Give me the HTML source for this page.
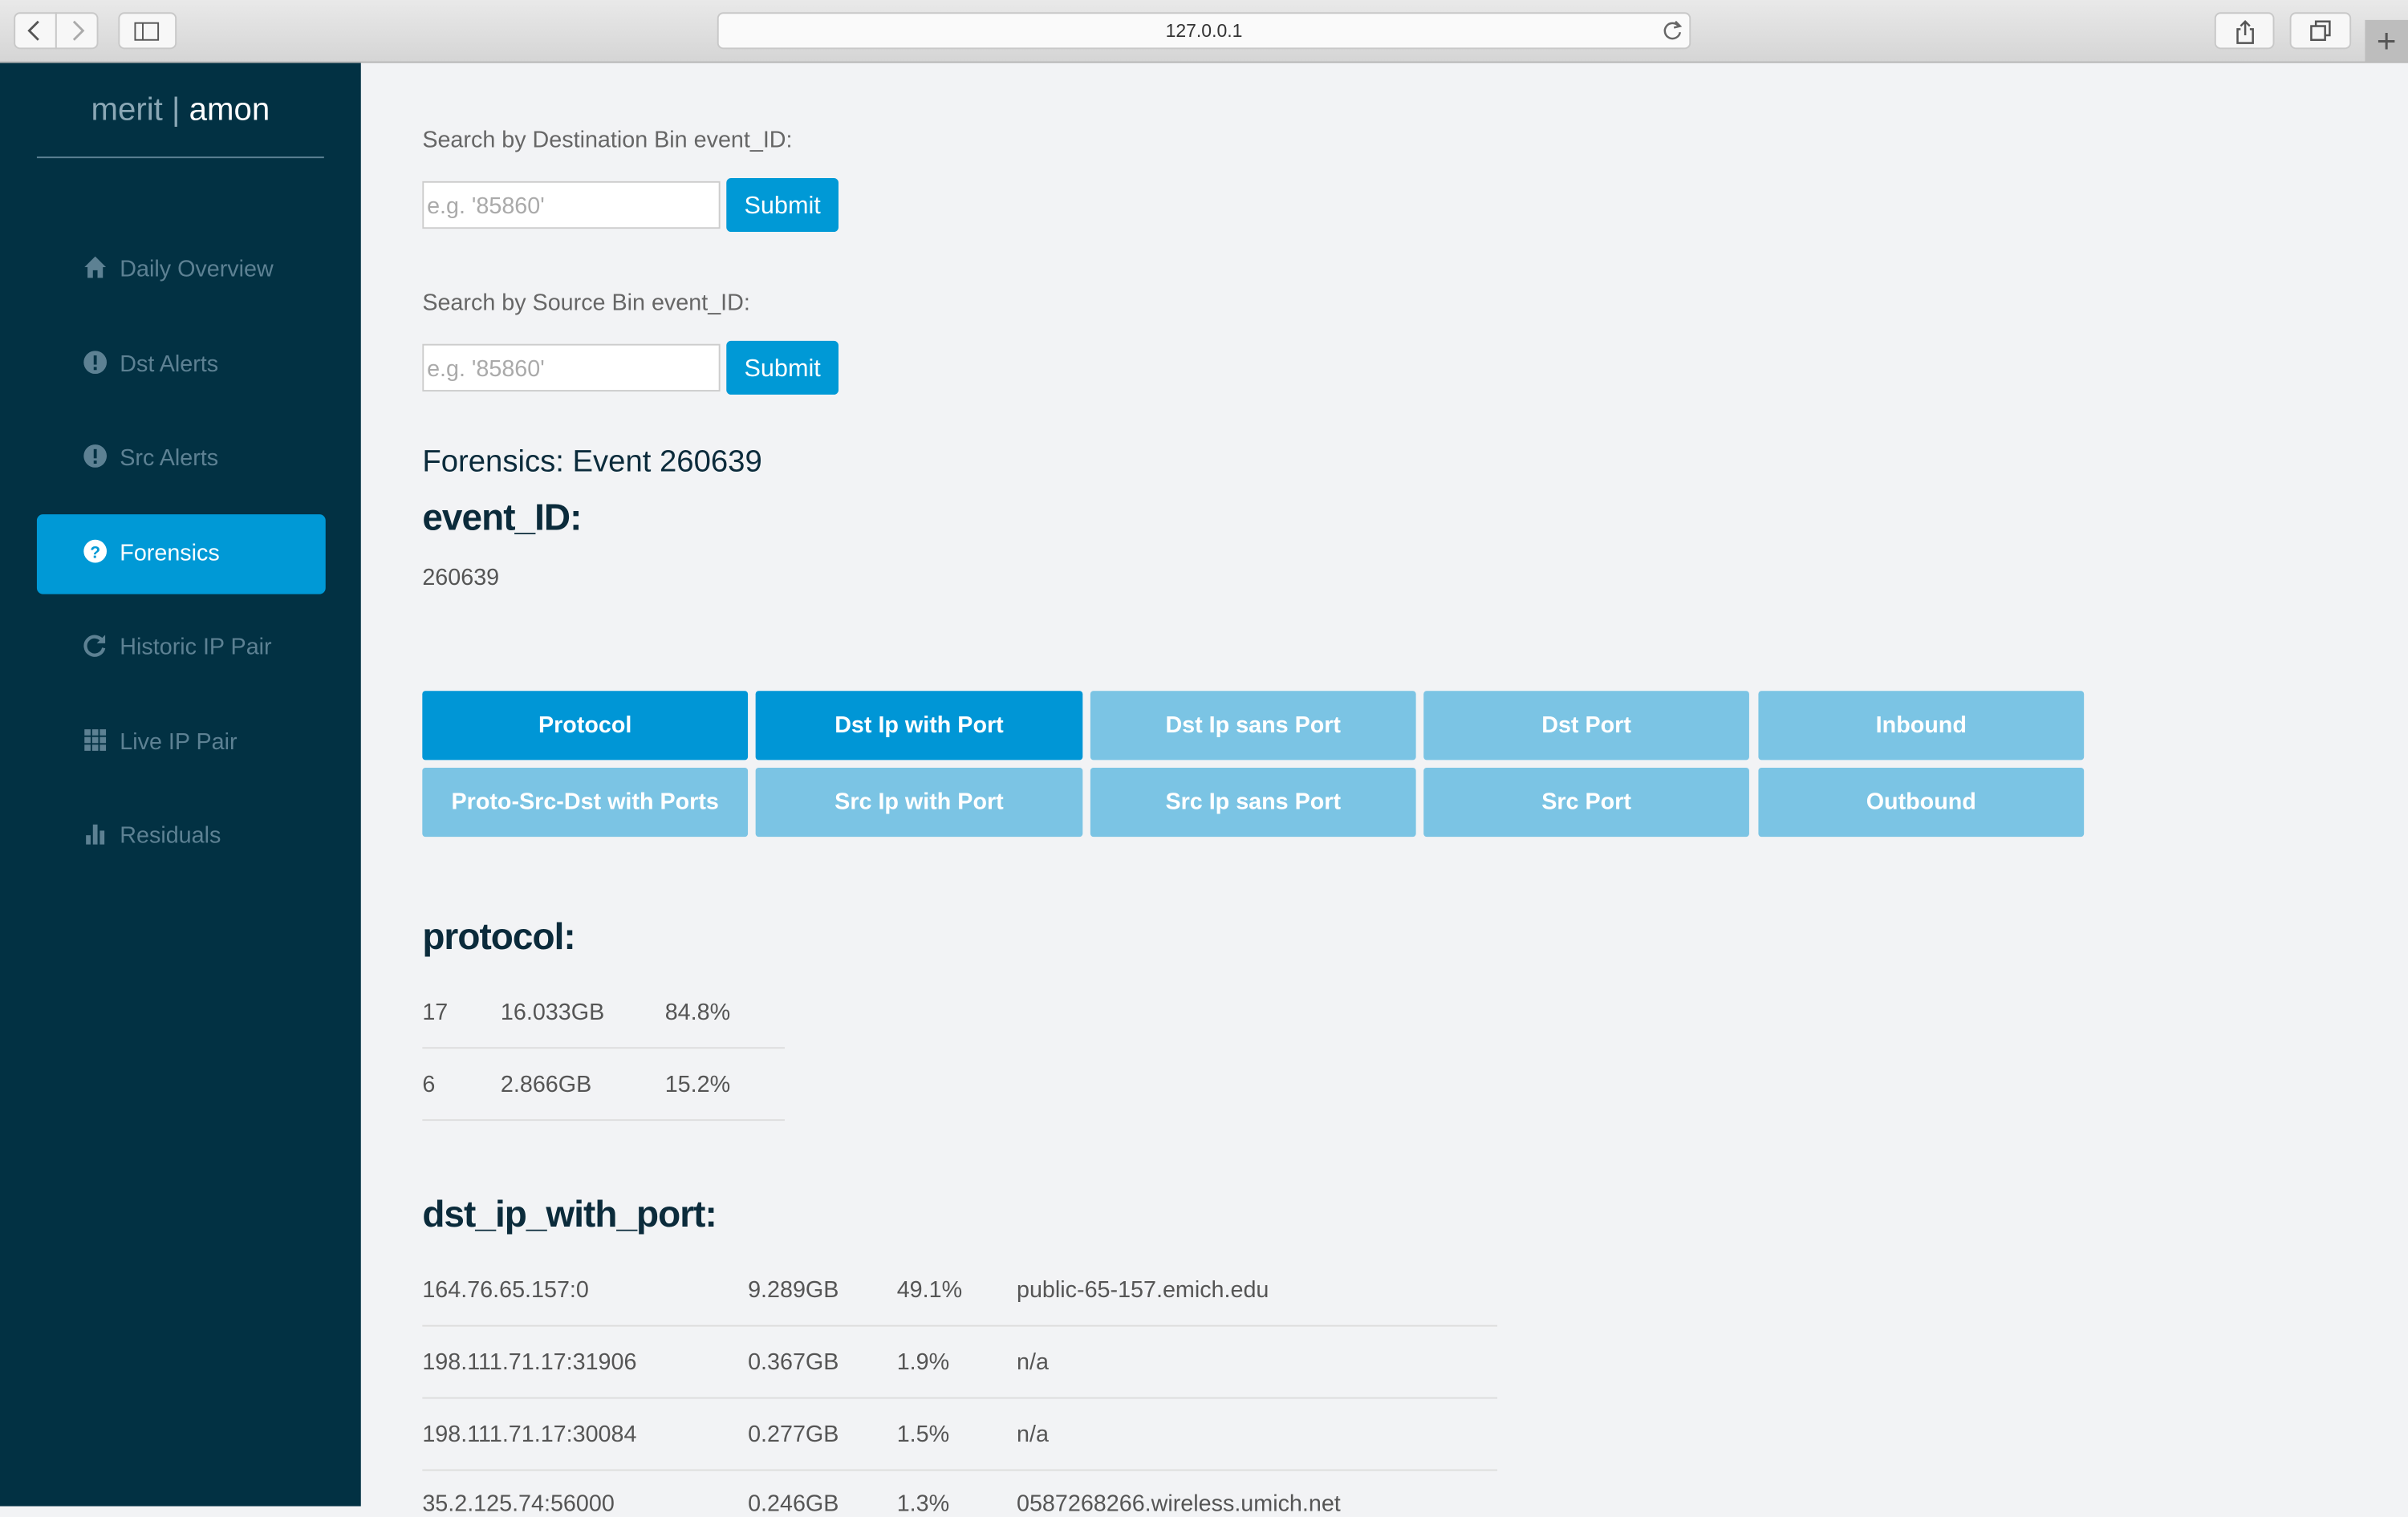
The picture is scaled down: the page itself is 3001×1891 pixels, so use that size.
<!DOCTYPE html>
<html><head><meta charset="utf-8"><style>
html,body{margin:0;padding:0;width:3001px;height:1876px;overflow:hidden;background:#f2f3f5}
#w{position:absolute;left:0;top:0;width:1568px;height:981px;transform:scale(1.91390);transform-origin:0 0;font-family:"Liberation Sans",sans-serif}
.a{position:absolute}
#tb{left:0;top:0;width:1568px;height:40px;background:linear-gradient(#e9e9e9,#d5d5d5);border-bottom:1px solid #b4b4b4}
.bt{background:#f7f7f7;border:1px solid #c8c8c8;border-radius:4px;height:24px;top:8px;box-sizing:border-box}
#sb{left:0;top:41px;width:235px;height:940px;background:#023143}
.nv{left:78px;color:#5d8193;font-size:15px;line-height:18px;margin-top:1px}
.ic{left:54px;width:16px;height:16px}
.lbl{left:275px;color:#666;font-size:15px;margin-top:1px}
.inp{left:275px;width:194px;height:31px;background:#fff;border:1px solid #ccc;box-sizing:border-box;color:#aaa;font-size:15px;line-height:31px;padding-left:2px}
.sub{left:473px;width:73px;height:35px;background:#0099d6;border-radius:3px;color:#fff;font-size:16px;line-height:37px;text-align:center}
.b{height:45px;color:#fff;font-weight:bold;font-size:15px;line-height:45px;text-align:center;background:#7bc4e4;border-radius:2px}
.b.on{background:#0096d6}
.h{left:275px;color:#0b2b3b;font-weight:bold;font-size:24px;letter-spacing:-0.5px;margin-top:1px}
.t{color:#555;font-size:15px;margin-top:1px}
.ln{height:1px;background:#ddd}
</style></head><body><div id="w">
<div id="tb" class="a">
 <div class="a bt" style="left:9px;width:28px;border-radius:4px 0 0 4px"></div>
 <div class="a bt" style="left:36px;width:28px;border-radius:0 4px 4px 0"></div>
 <svg class="a" style="left:15px;top:12px" width="44" height="16"><path d="M10 2 L4 8 L10 14" stroke="#555" stroke-width="1.5" fill="none"/><path d="M33 2 L39 8 L33 14" stroke="#aaa" stroke-width="1.5" fill="none"/></svg>
 <div class="a bt" style="left:77px;width:38px"></div>
 <svg class="a" style="left:87px;top:14px" width="18" height="14"><rect x="1" y="1" width="15" height="11" stroke="#555" fill="none"/><line x1="6" y1="1" x2="6" y2="12" stroke="#555"/></svg>
 <div class="a bt" style="left:467px;width:634px;background:#fafafa"></div>
 <div class="a" style="left:467px;top:13px;width:634px;text-align:center;font-size:12px;color:#333">127.0.0.1</div>
 <svg class="a" style="left:1082px;top:13px" width="14" height="14"><path d="M11 4 A5 5 0 1 0 12 8" stroke="#666" stroke-width="1.3" fill="none"/><path d="M9 1 L12 4 L8 5" stroke="#666" stroke-width="1.3" fill="none"/></svg>
 <div class="a bt" style="left:1442px;width:39px"></div>
 <svg class="a" style="left:1454px;top:12px" width="16" height="18"><path d="M5 7 H3 V16 H13 V7 H11 M8 11 V2 M5 5 L8 2 L11 5" stroke="#555" stroke-width="1.3" fill="none"/></svg>
 <div class="a bt" style="left:1491px;width:40px"></div>
 <svg class="a" style="left:1503px;top:12px" width="16" height="16"><rect x="2" y="5" width="9" height="9" stroke="#555" stroke-width="1.3" fill="none"/><path d="M5 5 V2 H14 V11 H11" stroke="#555" stroke-width="1.3" fill="none"/></svg>
 <div class="a" style="left:1540px;top:13px;width:28px;height:27px;background:#bdbdbd;color:#555;font-size:22px;line-height:27px;text-align:center">+</div>
</div>
<div id="sb" class="a">
 <div class="a" style="left:0;top:19px;width:235px;text-align:center;font-size:21px;color:#8aa7b5"><span style="color:#8aa7b5;font-weight:300">merit</span> <span style="color:#8aa7b5;font-weight:100">|</span> <span style="color:#fff">amon</span></div>
 <div class="a" style="left:24px;top:61px;width:187px;height:1px;background:#5d8193"></div>
 <div class="a" style="left:24px;top:294px;width:188px;height:52px;background:#0099d6;border-radius:4px"></div>
</div>
<svg class="a ic" style="top:166px" viewBox="0 0 16 16"><path d="M8 1 L1 8 H3 V15 H6.5 V10 H9.5 V15 H13 V8 H15 Z" fill="#5d8193"/></svg>
<div class="a nv" style="top:166px">Daily Overview</div>
<svg class="a ic" style="top:228px" viewBox="0 0 16 16"><circle cx="8" cy="8" r="7.5" fill="#5d8193"/><rect x="7" y="3.5" width="2" height="6" fill="#023143"/><rect x="7" y="11" width="2" height="2" fill="#023143"/></svg>
<div class="a nv" style="top:228px">Dst Alerts</div>
<svg class="a ic" style="top:289px" viewBox="0 0 16 16"><circle cx="8" cy="8" r="7.5" fill="#5d8193"/><rect x="7" y="3.5" width="2" height="6" fill="#023143"/><rect x="7" y="11" width="2" height="2" fill="#023143"/></svg>
<div class="a nv" style="top:289px">Src Alerts</div>
<svg class="a ic" style="top:351px" viewBox="0 0 16 16"><circle cx="8" cy="8" r="7.5" fill="#fff"/><text x="8" y="12.5" font-size="11" font-weight="bold" text-anchor="middle" fill="#0099d6" font-family="Liberation Sans">?</text></svg>
<div class="a nv" style="top:351px;color:#fff">Forensics</div>
<svg class="a ic" style="top:412px" viewBox="0 0 16 16"><path d="M13 6 A6 6 0 1 0 13.5 10" stroke="#5d8193" stroke-width="2.2" fill="none"/><path d="M14.5 1.5 V7 H9 Z" fill="#5d8193"/></svg>
<div class="a nv" style="top:412px">Historic IP Pair</div>
<svg class="a ic" style="top:474px" viewBox="0 0 16 16" fill="#5d8193"><rect x="1" y="1" width="4" height="4"/><rect x="6" y="1" width="4" height="4"/><rect x="11" y="1" width="4" height="4"/><rect x="1" y="6" width="4" height="4"/><rect x="6" y="6" width="4" height="4"/><rect x="11" y="6" width="4" height="4"/><rect x="1" y="11" width="4" height="4"/><rect x="6" y="11" width="4" height="4"/><rect x="11" y="11" width="4" height="4"/></svg>
<div class="a nv" style="top:474px">Live IP Pair</div>
<svg class="a ic" style="top:535px" viewBox="0 0 16 16" fill="#5d8193"><rect x="2" y="9" width="3" height="6"/><rect x="6.5" y="2" width="3" height="13"/><rect x="11" y="6" width="3" height="9"/></svg>
<div class="a nv" style="top:535px">Residuals</div>

<div class="a lbl" style="top:82px">Search by Destination Bin event_ID:</div>
<div class="a inp" style="top:118px">e.g. '85860'</div>
<div class="a sub" style="top:116px">Submit</div>
<div class="a lbl" style="top:188px">Search by Source Bin event_ID:</div>
<div class="a inp" style="top:224px">e.g. '85860'</div>
<div class="a sub" style="top:222px">Submit</div>
<div class="a" style="left:275px;top:290px;font-size:20px;color:#0b2b3b">Forensics: Event 260639</div>
<div class="a h" style="top:323px">event_ID:</div>
<div class="a t" style="left:275px;top:367px">260639</div>

<div class="a b on" style="left:275px;top:450px;width:212px">Protocol</div>
<div class="a b on" style="left:492px;top:450px;width:213px">Dst Ip with Port</div>
<div class="a b" style="left:710px;top:450px;width:212px">Dst Ip sans Port</div>
<div class="a b" style="left:927px;top:450px;width:212px">Dst Port</div>
<div class="a b" style="left:1145px;top:450px;width:212px">Inbound</div>
<div class="a b" style="left:275px;top:500px;width:212px">Proto-Src-Dst with Ports</div>
<div class="a b" style="left:492px;top:500px;width:213px">Src Ip with Port</div>
<div class="a b" style="left:710px;top:500px;width:212px">Src Ip sans Port</div>
<div class="a b" style="left:927px;top:500px;width:212px">Src Port</div>
<div class="a b" style="left:1145px;top:500px;width:212px">Outbound</div>

<div class="a h" style="top:596px">protocol:</div>
<div class="a t" style="left:275px;top:650px">17</div><div class="a t" style="left:326px;top:650px">16.033GB</div><div class="a t" style="left:433px;top:650px">84.8%</div>
<div class="a ln" style="left:275px;top:682px;width:236px"></div>
<div class="a t" style="left:275px;top:697px">6</div><div class="a t" style="left:326px;top:697px">2.866GB</div><div class="a t" style="left:433px;top:697px">15.2%</div>
<div class="a ln" style="left:275px;top:729px;width:236px"></div>

<div class="a h" style="top:777px">dst_ip_with_port:</div>
<div class="a t" style="left:275px;top:831px">164.76.65.157:0</div><div class="a t" style="left:487px;top:831px">9.289GB</div><div class="a t" style="left:584px;top:831px">49.1%</div><div class="a t" style="left:662px;top:831px">public-65-157.emich.edu</div>
<div class="a ln" style="left:275px;top:863px;width:700px"></div>
<div class="a t" style="left:275px;top:878px">198.111.71.17:31906</div><div class="a t" style="left:487px;top:878px">0.367GB</div><div class="a t" style="left:584px;top:878px">1.9%</div><div class="a t" style="left:662px;top:878px">n/a</div>
<div class="a ln" style="left:275px;top:910px;width:700px"></div>
<div class="a t" style="left:275px;top:925px">198.111.71.17:30084</div><div class="a t" style="left:487px;top:925px">0.277GB</div><div class="a t" style="left:584px;top:925px">1.5%</div><div class="a t" style="left:662px;top:925px">n/a</div>
<div class="a ln" style="left:275px;top:957px;width:700px"></div>
<div class="a t" style="left:275px;top:970px">35.2.125.74:56000</div><div class="a t" style="left:487px;top:970px">0.246GB</div><div class="a t" style="left:584px;top:970px">1.3%</div><div class="a t" style="left:662px;top:970px">0587268266.wireless.umich.net</div>
</div></body></html>
